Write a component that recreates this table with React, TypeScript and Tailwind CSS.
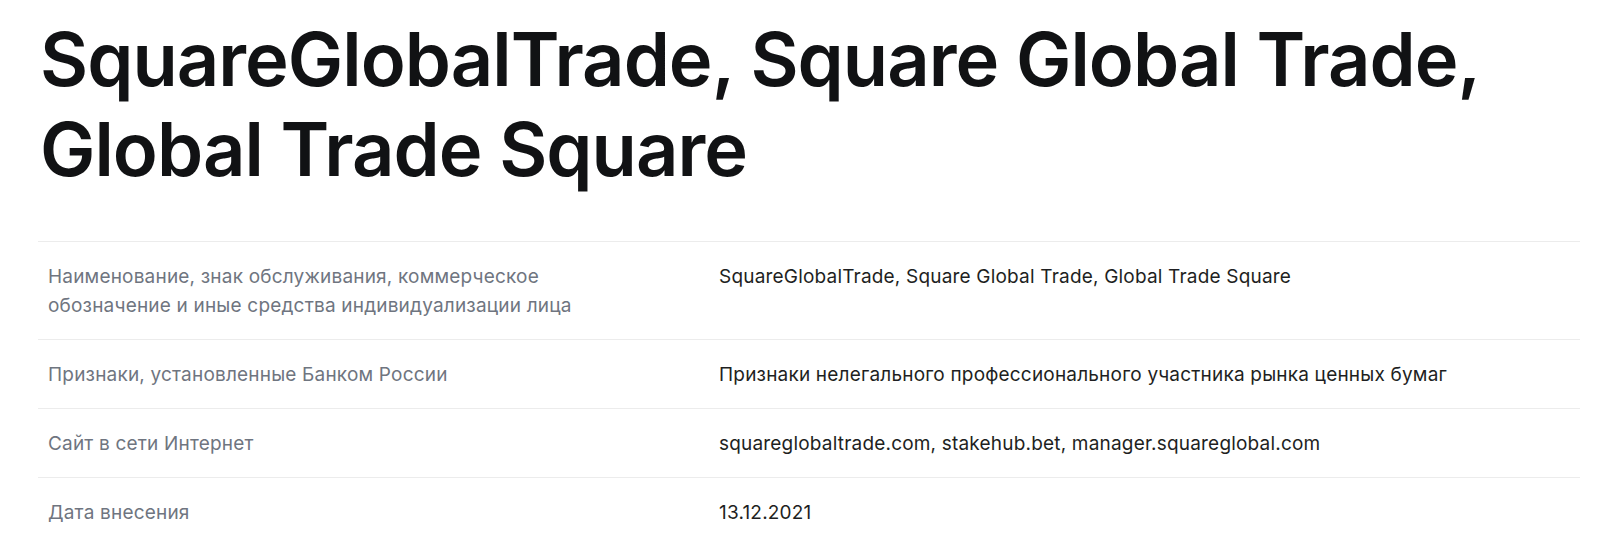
const rows: { label: string; value: string }[] = [
  {
    label: 'Наименование, знак обслуживания, коммерческое обозначение и иные средства индивидуализации лица',
    value: 'SquareGlobalTrade, Square Global Trade, Global Trade Square',
  },
  {
    label: 'Признаки, установленные Банком России',
    value: 'Признаки нелегального профессионального участника рынка ценных бумаг',
  },
  {
    label: 'Сайт в сети Интернет',
    value: 'squareglobaltrade.com, stakehub.bet, manager.squareglobal.com',
  },
  {
    label: 'Дата внесения',
    value: '13.12.2021',
  },
]

export default function App() {
  return (
    <div className="min-h-[544px] bg-white pl-[38px] pr-[20px] pt-[14px] font-['Inter',sans-serif]">
      <h1 className="pl-[2px] text-[74px] font-semibold leading-[90px] tracking-[-0.013em] text-[#111214]">
        SquareGlobalTrade, Square Global Trade,
        <br />
        Global Trade Square
      </h1>

      {/* Таблица сведений */}
      <div className="mt-[47px] border-t border-[#ececec]">
        {rows.map((row) => (
          <div
            key={row.label}
            className="grid grid-cols-[671px_1fr] border-b border-[#ececec] text-[19px] leading-[29px] tracking-[0.01em]"
          >
            <div className="max-w-[580px] px-[10px] pt-[20px] pb-[19px] text-[#6f7580]">{row.label}</div>
            <div className="px-[10px] pt-[20px] pb-[19px] text-[#1e1f22]">{row.value}</div>
          </div>
        ))}
      </div>
    </div>
  )
}
